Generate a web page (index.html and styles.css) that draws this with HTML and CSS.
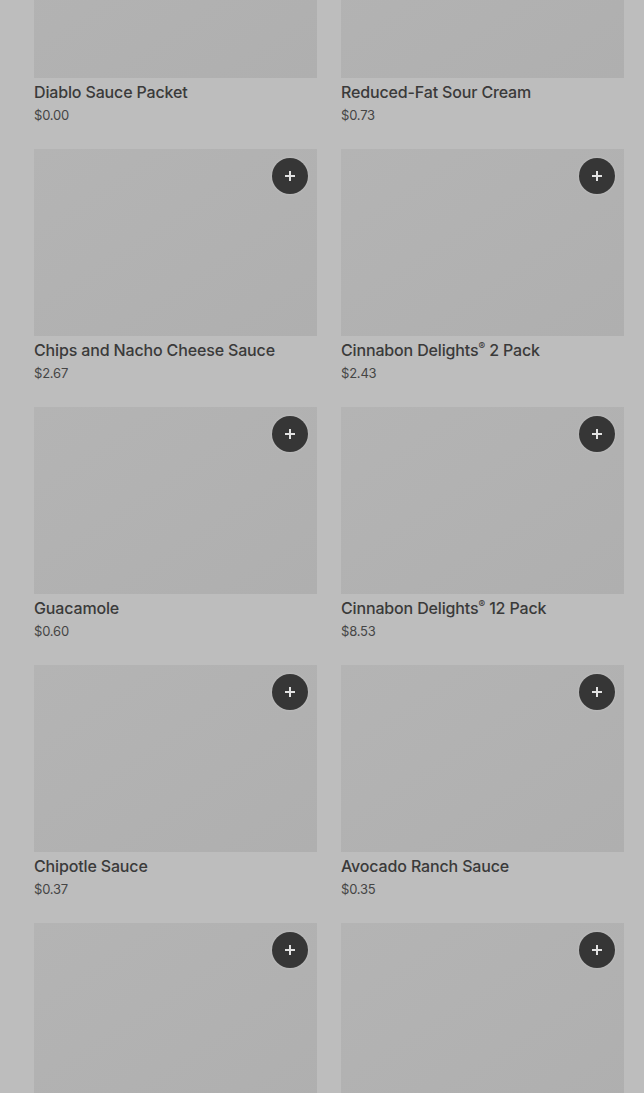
FILE: index.html
```html
<!DOCTYPE html>
<html lang="en">
<head>
  <meta charset="UTF-8" />
  <title>Menu - Sides</title>
  <link rel="stylesheet" href="styles.css">
</head>
<body>
<div class="page">
  <div class="menuGrid">

    <div class="item">
      <div class="thumb"></div>
      <div class="itemName">Diablo Sauce Packet</div>
      <div class="itemPrice">$0.00</div>
    </div>
    <div class="item">
      <div class="thumb"></div>
      <div class="itemName">Reduced-Fat Sour Cream</div>
      <div class="itemPrice">$0.73</div>
    </div>

    <div class="item">
      <div class="thumb"><button class="addBtn"><svg viewBox="0 0 12 12"><path d="M6 1v10M1 6h10"/></svg></button></div>
      <div class="itemName">Chips and Nacho Cheese Sauce</div>
      <div class="itemPrice">$2.67</div>
    </div>
    <div class="item">
      <div class="thumb"><button class="addBtn"><svg viewBox="0 0 12 12"><path d="M6 1v10M1 6h10"/></svg></button></div>
      <div class="itemName">Cinnabon Delights<sup>®</sup> 2 Pack</div>
      <div class="itemPrice">$2.43</div>
    </div>

    <div class="item">
      <div class="thumb"><button class="addBtn"><svg viewBox="0 0 12 12"><path d="M6 1v10M1 6h10"/></svg></button></div>
      <div class="itemName">Guacamole</div>
      <div class="itemPrice">$0.60</div>
    </div>
    <div class="item">
      <div class="thumb"><button class="addBtn"><svg viewBox="0 0 12 12"><path d="M6 1v10M1 6h10"/></svg></button></div>
      <div class="itemName">Cinnabon Delights<sup>®</sup> 12 Pack</div>
      <div class="itemPrice">$8.53</div>
    </div>

    <div class="item">
      <div class="thumb"><button class="addBtn"><svg viewBox="0 0 12 12"><path d="M6 1v10M1 6h10"/></svg></button></div>
      <div class="itemName">Chipotle Sauce</div>
      <div class="itemPrice">$0.37</div>
    </div>
    <div class="item">
      <div class="thumb"><button class="addBtn"><svg viewBox="0 0 12 12"><path d="M6 1v10M1 6h10"/></svg></button></div>
      <div class="itemName">Avocado Ranch Sauce</div>
      <div class="itemPrice">$0.35</div>
    </div>

    <div class="item">
      <div class="thumb"><button class="addBtn"><svg viewBox="0 0 12 12"><path d="M6 1v10M1 6h10"/></svg></button></div>
    </div>
    <div class="item">
      <div class="thumb"><button class="addBtn"><svg viewBox="0 0 12 12"><path d="M6 1v10M1 6h10"/></svg></button></div>
    </div>

  </div>
</div>
</body>
</html>
```

FILE: styles.css
```css
html, body {
  margin: 0;
  padding: 0;
  background: #bdbdbd;
  font-family: Inter, Roboto, "Liberation Sans", sans-serif;
  color: #383838;
  overflow: hidden;
}

.page {
  height: 1093px;
  padding: 0 20px 0 34px;
  box-sizing: border-box;
  overflow: hidden;
}

/* two columns of menu items, first row is scrolled partly out of view */
.menuGrid {
  display: grid;
  grid-template-columns: 283px 283px;
  column-gap: 24px;
  row-gap: 0;
  margin-top: -109px;
}

.item {
  height: 258px;
}

.thumb {
  position: relative;
  height: 187px;
  background: linear-gradient(to bottom right, #b4b4b4, #afafaf);
}

.addBtn {
  position: absolute;
  top: 9px;
  right: 9px;
  width: 36px;
  height: 36px;
  border-radius: 50%;
  border: none;
  background: #363636;
  padding: 0;
  display: flex;
  align-items: center;
  justify-content: center;
  box-shadow: 0 0 3px rgba(255,255,255,0.25);
}
.addBtn svg {
  width: 12px;
  height: 12px;
  stroke: #e2e2e2;
  stroke-width: 2;
  fill: none;
}

.itemName {
  margin-top: 4px;
  font-size: 16px;
  font-weight: 500;
  line-height: 20px;
  color: #3a3a3a;
  letter-spacing: -0.15px;
}
.itemName sup {
  font-size: 10px;
  line-height: 0;
}

.itemPrice {
  margin-top: 4px;
  font-size: 13px;
  line-height: 18px;
  color: #454545;
  letter-spacing: -0.2px;
}
```
